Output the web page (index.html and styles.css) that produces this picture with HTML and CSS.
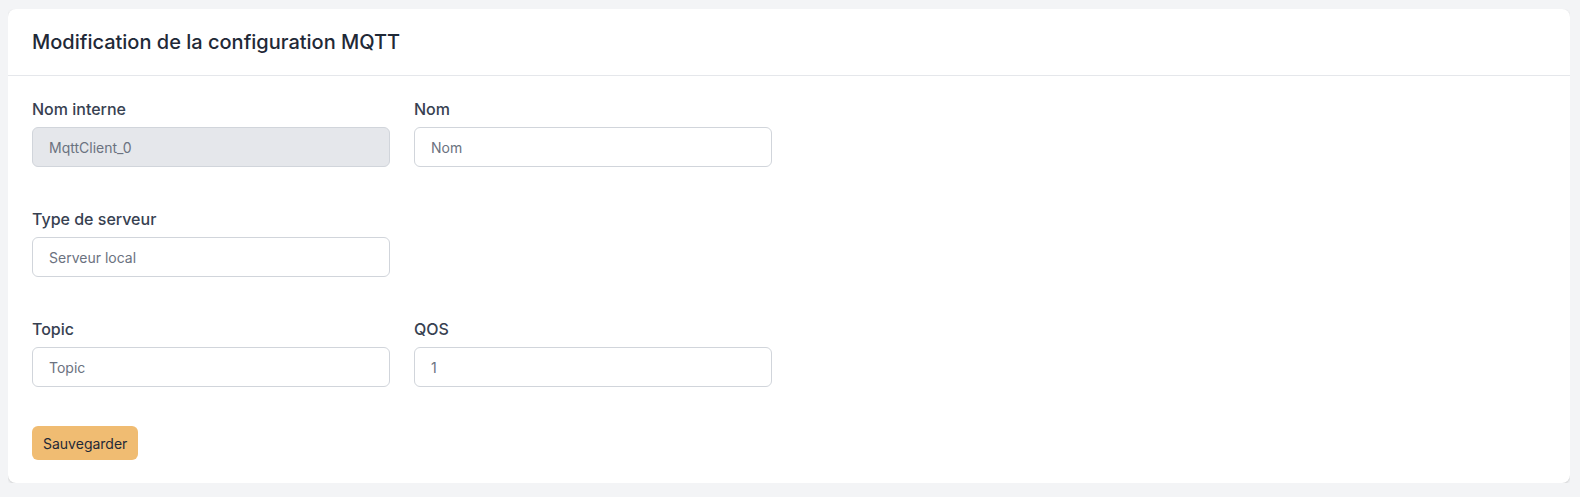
FILE: index.html
```html
<!DOCTYPE html>
<html lang="fr">
<head>
<meta charset="utf-8">
<title>Modification de la configuration MQTT</title>
<link rel="stylesheet" href="styles.css">
</head>
<body>
<div class="card">
  <div class="card-header">
    <h1 class="card-title">Modification de la configuration MQTT</h1>
  </div>
  <form class="card-body">
    <div class="row">
      <div class="field">
        <label class="label">Nom interne</label>
        <input class="input input-disabled" type="text" value="MqttClient_0" disabled>
      </div>
      <div class="field">
        <label class="label">Nom</label>
        <input class="input" type="text" placeholder="Nom">
      </div>
    </div>
    <div class="row">
      <div class="field">
        <label class="label">Type de serveur</label>
        <input class="input" type="text" placeholder="Serveur local">
      </div>
    </div>
    <div class="row">
      <div class="field">
        <label class="label">Topic</label>
        <input class="input" type="text" placeholder="Topic">
      </div>
      <div class="field">
        <label class="label">QOS</label>
        <input class="input" type="text" placeholder="1">
      </div>
    </div>
    <div class="actions">
      <button class="btn" type="button">Sauvegarder</button>
    </div>
  </form>
</div>
</body>
</html>
```
FILE: styles.css
```css
html, body {
  background: #f3f4f6;
}
body {
  margin: 9px 10px 8px 8px;
  font-family: Inter, "Noto Sans", sans-serif;
  color: #1f2937;
}
.card {
  background: #ffffff;
  border-radius: 8px;
  box-shadow: 0 1px 3px rgba(0, 0, 0, 0.12), 0 1px 2px rgba(0, 0, 0, 0.06);
}
.card-header {
  height: 66px;
  display: flex;
  align-items: center;
  padding: 0 24px;
  border-bottom: 1px solid #e5e7eb;
}
.card-title {
  margin: 0;
  font-size: 20px;
  line-height: 24px;
  font-weight: 500;
  color: #1f2937;
}
.card-body {
  padding: 23px 24px 23px;
  display: flex;
  flex-direction: column;
  gap: 42px;
}
.row {
  display: flex;
  gap: 24px;
}
.field {
  width: 358px;
  display: flex;
  flex-direction: column;
}
.label {
  display: block;
  font-size: 16px;
  line-height: 20px;
  font-weight: 500;
  color: #374151;
  margin-bottom: 8px;
}
.input {
  box-sizing: border-box;
  height: 40px;
  width: 100%;
  padding: 0 16px;
  border: 1px solid #d1d5db;
  border-radius: 6px;
  background: #ffffff;
  font-family: Inter, "Noto Sans", sans-serif;
  font-size: 14px;
  color: #4b5563;
  outline: none;
}
.input::placeholder {
  color: #6b7280;
  opacity: 1;
}
.input-disabled {
  background: #e5e7eb;
  color: #6b7280;
  -webkit-text-fill-color: #6b7280;
}
.actions {
  margin-top: -3px;
}
.btn {
  height: 34px;
  padding: 0 11px;
  border: none;
  border-radius: 6px;
  background: #f0bc72;
  font-family: Inter, "Noto Sans", sans-serif;
  font-size: 14px;
  font-weight: 400;
  color: #1f2937;
}
```
